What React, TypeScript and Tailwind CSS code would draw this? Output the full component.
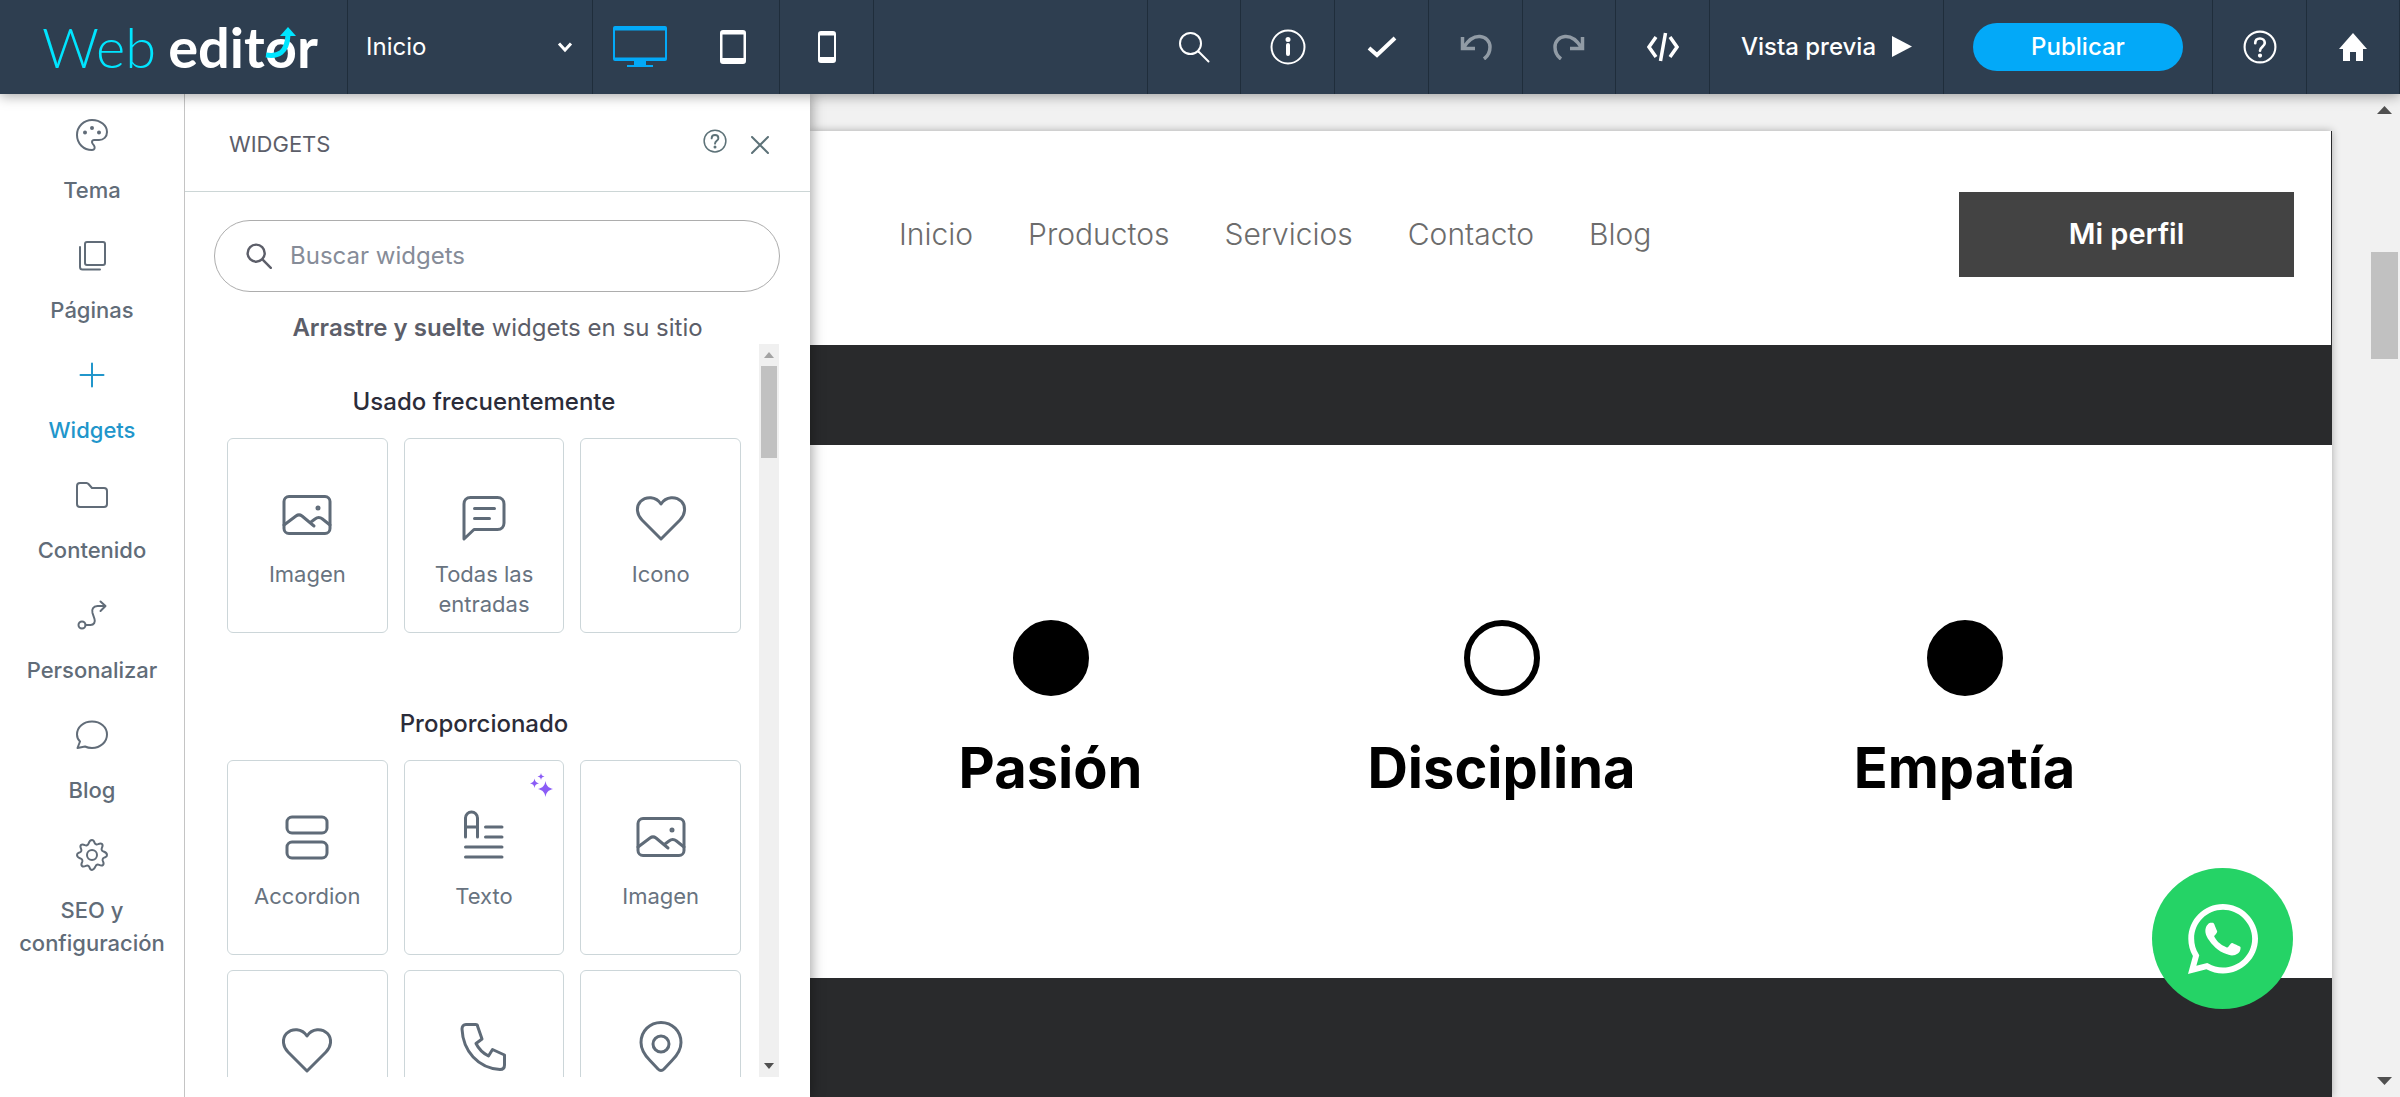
import React, { useState } from 'react';
import { FaWhatsapp } from 'react-icons/fa';

type IconProps = { className?: string };

// shared wrapper for the line icons
const Line = ({ className, box = 24, width = 1.5, children }: IconProps & { box?: number; width?: number; children: React.ReactNode }) => (
  <svg viewBox={`0 0 ${box} ${box}`} className={className} fill="none" stroke="currentColor" strokeWidth={width} strokeLinecap="round" strokeLinejoin="round" aria-hidden="true">
    {children}
  </svg>
);

const PaletteIcon = ({ className }: IconProps) => (
  <Line className={className} box={32} width={2}>
    <path d="M16 31C7.500 31 1 24.500 1 16S8 1 16 1c8.500 0 15 5.500 15 12 0 5-3.500 8-8 8h-5c-2 0-2.500 2-1.500 3.500l1.500 2c1.500 2.500.500 4.500-2 4.500z" />
    <circle cx="9" cy="13.500" r="1" fill="currentColor" />
    <circle cx="16" cy="9" r="1" fill="currentColor" />
    <circle cx="23" cy="13.500" r="1" fill="currentColor" />
  </Line>
);

const PagesIcon = ({ className }: IconProps) => (
  <Line className={className} box={32} width={2}>
    <rect x="9" y="3" width="20" height="23" rx="2" />
    <path d="M4 8v20a2.500 2.500 0 0 0 2.500 2.500H24" />
  </Line>
);

const PlusIcon = ({ className }: IconProps) => (
  <Line className={className} box={32} width={2}>
    <path d="M16 4.500v23M4.500 16h23" />
  </Line>
);

const FolderIcon = ({ className }: IconProps) => (
  <Line className={className} box={32} width={2}>
    <path d="M1 7a3 3 0 0 1 3-3h6.500a3 3 0 0 1 2 1l3.500 4h12a3 3 0 0 1 3 3v13a3 3 0 0 1-3 3H4a3 3 0 0 1-3-3z" />
  </Line>
);

const RouteIcon = ({ className }: IconProps) => (
  <Line className={className} box={32} width={2}>
    <circle cx="6" cy="26" r="3.500" />
    <path d="M9.500 26h5c3.500 0 5-3 4-6l-2-6c-1-3.500.500-7 5-7H29M24.500 2.500 29.500 7l-5 5" />
  </Line>
);

const ChatIcon = ({ className }: IconProps) => (
  <Line className={className} box={32} width={2}>
    <path d="M16 2.500c8.500 0 15 5.500 15 13s-6.500 13.500-15 13.500c-2.500 0-5-.5-7-1.500l-7.500 1.500 2.500-6.500c-2-2-3-4.500-3-7C1 8 7.500 2.500 16 2.500z" />
  </Line>
);

const GearIcon = ({ className }: IconProps) => (
  <Line className={className} box={32} width={2}>
    <circle cx="16" cy="16" r="5" />
    <path d="M16 1c1.600 0 2 1.200 2.600 2.800.6 1.500 2 2 3.500 1.300 1.600-.8 2.800-1.200 3.900-.1s.7 2.300-.1 3.900c-.7 1.500-.2 2.900 1.300 3.500 1.600.6 3.800 1.200 3.800 3.600s-1.200 2-2.800 2.600c-1.500.6-2 2-1.300 3.500.8 1.600 1.200 2.800.1 3.900s-2.300.7-3.900-.1c-1.500-.7-2.900-.2-3.500 1.300C18.400 29.800 17.600 31 16 31s-2-1.200-2.600-2.800c-.6-1.500-2-2-3.500-1.300-1.600.8-2.800 1.200-3.900.1s-.7-2.300.1-3.900c.7-1.500.2-2.900-1.300-3.500C3.200 19 1 18.400 1 16s1.200-2 2.800-2.600c1.500-.6 2-2 1.300-3.500C4.300 8.300 3.900 7.100 5 6s2.300-.7 3.900.1c1.500.7 2.900.2 3.500-1.300C13 3.200 14.400 1 16 1z" />
  </Line>
);

const ImageIcon = ({ className }: IconProps) => (
  <Line className={className} box={56} width={3}>
    <rect x="5" y="9.500" width="46" height="37" rx="5" />
    <path d="M5 38l12-9c2-1.500 4-1.500 6 0l12 10M32 35l4-3c2.500-2 5-2 7.500 0l7.500 6" />
    <circle cx="39" cy="21" r="1" fill="currentColor" />
  </Line>
);

const PostsIcon = ({ className }: IconProps) => (
  <Line className={className} box={56} width={3}>
    <path d="M8 52V17c0-4 2.500-6.500 6.500-6.500h27c4 0 6.500 2.500 6.500 6.500v19c0 4-2.500 6.500-6.500 6.500H18z" />
    <path d="M18.500 21.500h20M18.500 31.500h15" />
  </Line>
);

const HeartIcon = ({ className }: IconProps) => (
  <Line className={className} box={56} width={3}>
    <path d="M28 52 9 33c-5-5-6.500-13-1.500-18.500C13 9 23 9 28 17c5-8 15-8 20.500-2.500C53.500 20 52 28 47 33z" />
  </Line>
);

const AccordionIcon = ({ className }: IconProps) => (
  <Line className={className} box={56} width={3}>
    <rect x="8" y="8" width="40" height="16" rx="5" />
    <rect x="8" y="33" width="40" height="16" rx="5" />
  </Line>
);

const TextIcon = ({ className }: IconProps) => (
  <Line className={className} box={56} width={3}>
    <path d="M9.500 28V9a6 6 0 0 1 12 0v19M9.500 18h12M29.500 18H46M29.500 28H46M9.500 38H46M9.500 48H46" />
  </Line>
);

const PhoneIcon = ({ className }: IconProps) => (
  <Line className={className} box={56} width={3}>
    <path d="M10 5.500h9.500c1 0 2 .5 2 1.500L26 20l-6 4.500c3 6 6.500 9.500 12.500 12.500l4-6.500L48.500 36v10c0 2.500-1.500 4.500-4.500 4.500C22 49 7 32 6 10c0-2.500 1.500-4.500 4-4.500z" />
  </Line>
);

const PinIcon = ({ className }: IconProps) => (
  <Line className={className} box={56} width={3}>
    <path d="M28 3.500c11 0 20 8.500 20 20 0 8-4 13-9 18l-8 8.500c-2 2-4 2-6 0l-8-8.500c-5-5-9-10-9-18 0-11.500 9-20 20-20z" />
    <circle cx="28" cy="25" r="8" />
  </Line>
);

const SearchIcon = ({ className, width = 2 }: IconProps & { width?: number }) => (
  <Line className={className} box={32} width={width}>
    <circle cx="12.500" cy="12.500" r="10.500" />
    <path d="M20.500 20.500 30.500 30.500" />
  </Line>
);

const HelpIcon = ({ className }: IconProps) => (
  <Line className={className} box={32} width={2}>
    <circle cx="16" cy="16" r="14.500" />
    <path d="M11.500 12.500c0-3 2-4.500 4.500-4.500s4.500 1.800 4.500 4.200c0 3.300-4.500 3.800-4.500 7.300" strokeWidth="2.500" />
    <circle cx="16" cy="24" r="1" fill="currentColor" />
  </Line>
);

const Sparkles = ({ className }: IconProps) => (
  <svg viewBox="0 0 24 24" className={className} fill="#8b5cf6" aria-hidden="true">
    <path d="M16.500 8c1 5 2.500 6.500 7.500 8-5 1.500-6.500 3-7.500 8-1-5-2.500-6.500-7.500-8 5-1.500 6.500-3 7.500-8zM5.500 5.500c.6 3 1.500 4 4.500 4.800-3 .8-3.900 1.800-4.500 4.700-.6-2.900-1.500-3.900-4.500-4.700 3-.8 3.900-1.800 4.500-4.800zM12 0c.5 2.200 1.200 3 3.500 3.500C13.200 4 12.500 4.800 12 7c-.5-2.200-1.200-3-3.500-3.500C10.800 3 11.500 2.200 12 0z" />
  </svg>
);

const sections = [
  { label: 'Tema', icon: PaletteIcon },
  { label: 'Páginas', icon: PagesIcon },
  { label: 'Widgets', icon: PlusIcon },
  { label: 'Contenido', icon: FolderIcon },
  { label: 'Personalizar', icon: RouteIcon },
  { label: 'Blog', icon: ChatIcon },
  { label: 'SEO y configuración', icon: GearIcon },
];

type Widget = { label?: string; icon: React.FC<IconProps>; ai?: boolean };

const frequent: Widget[] = [
  { label: 'Imagen', icon: ImageIcon },
  { label: 'Todas las entradas', icon: PostsIcon },
  { label: 'Icono', icon: HeartIcon },
];

const provided: Widget[] = [
  { label: 'Accordion', icon: AccordionIcon },
  { label: 'Texto', icon: TextIcon, ai: true },
  { label: 'Imagen', icon: ImageIcon },
  { icon: HeartIcon },
  { icon: PhoneIcon },
  { icon: PinIcon },
];

const values = [
  { label: 'Pasión', filled: true },
  { label: 'Disciplina', filled: false },
  { label: 'Empatía', filled: true },
];

const links = ['Inicio', 'Productos', 'Servicios', 'Contacto', 'Blog'];

const cell = 'h-full shrink-0 flex items-center justify-center border-l border-[#1f2d3b]';

function Logo() {
  return (
    <a href="#" className="relative flex w-[347px] shrink-0 items-center gap-3 pl-[42px] font-[Lato,sans-serif] leading-none">
      <span className="text-[56px] font-light text-[#00e5ff]">Web</span>
      <span className="text-[56px] font-bold text-white">editor</span>
      <svg viewBox="0 0 32 32" className="absolute top-[27px] left-[265px] w-8" fill="none" aria-hidden="true">
        <path d="M1 28c12 2 21-2 22-20" stroke="#00e5ff" strokeWidth="5" />
        <path d="M23 0 31 9H15z" fill="#00e5ff" />
      </svg>
    </a>
  );
}

function TopBar() {
  return (
    <header className="relative z-30 flex h-[94px] shrink-0 bg-[#2e3e50] text-white shadow-[0_2px_12px_rgba(0,0,0,0.35)]">
      <Logo />
      <div className="relative flex w-[245px] shrink-0 items-center border-l border-[#1f2d3b]">
        <select aria-label="Página" className="h-full w-full appearance-none bg-transparent pl-[18px] text-2xl text-white">
          <option>Inicio</option>
        </select>
        <svg viewBox="0 0 16 12" className="pointer-events-none absolute right-[19px] w-4" fill="none" stroke="currentColor" strokeWidth="3" aria-hidden="true">
          <path d="M2 2.500 8 9l6-6.500" />
        </svg>
      </div>
      <div className={`${cell} w-[187px]`}>
        <button aria-label="Escritorio" className="flex h-full flex-1 items-center justify-center">
          <svg viewBox="0 0 54 42" className="w-[54px]" fill="#03a9f8" aria-hidden="true">
            <path fillRule="evenodd" d="M2 0h50a2 2 0 0 1 2 2v31a2 2 0 0 1-2 2H33v4h7v2H14v-2h7v-4H2a2 2 0 0 1-2-2V2a2 2 0 0 1 2-2zM2 4.500v27h50v-27z" />
          </svg>
        </button>
        <button aria-label="Tableta" className="flex h-full flex-1 items-center justify-center">
          <svg viewBox="0 0 26 34" className="w-[26px]" fill="currentColor" aria-hidden="true">
            <path fillRule="evenodd" d="M3 0h20a3 3 0 0 1 3 3v28a3 3 0 0 1-3 3H3a3 3 0 0 1-3-3V3a3 3 0 0 1 3-3zM2.500 4.500V28h21V4.500z" />
          </svg>
        </button>
      </div>
      <button aria-label="Móvil" className={`${cell} w-[94px]`}>
        <svg viewBox="0 0 18 32" className="w-[18px]" fill="currentColor" aria-hidden="true">
          <path fillRule="evenodd" d="M3 0h12a3 3 0 0 1 3 3v26a3 3 0 0 1-3 3H3a3 3 0 0 1-3-3V3a3 3 0 0 1 3-3zM2 4.500V26h14V4.500z" />
        </svg>
      </button>
      <div className="h-full flex-1 border-l border-[#1f2d3b]" />
      <button aria-label="Buscar" className={`${cell} w-[93px]`}>
        <SearchIcon className="w-8" />
      </button>
      <button aria-label="Información" className={`${cell} w-[94px]`}>
        <Line className="w-9" box={36} width={2}>
          <circle cx="18" cy="18" r="16.500" />
          <path d="M18 16v9" strokeWidth="4" />
          <circle cx="18" cy="10.500" r="1.500" fill="currentColor" />
        </Line>
      </button>
      <button aria-label="Guardado" className={`${cell} w-[94px]`}>
        <svg viewBox="0 0 30 22" className="w-[30px]" fill="none" stroke="currentColor" strokeWidth="4" aria-hidden="true">
          <path d="M2 12l8 7L28 2" />
        </svg>
      </button>
      <button aria-label="Deshacer" disabled className={`${cell} w-[94px] text-[#919ba5]`}>
        <svg viewBox="0 0 32 26" className="w-8" fill="none" stroke="currentColor" strokeWidth="3.500" aria-hidden="true">
          <path d="M2.500 3v11.500H15M4 13C9 5 14 2 20 2.500c6 .5 10 5 10 10.500 0 5-2 9-6 12" />
        </svg>
      </button>
      <button aria-label="Rehacer" disabled className={`${cell} w-[93px] text-[#919ba5]`}>
        <svg viewBox="0 0 32 26" className="w-8" fill="none" stroke="currentColor" strokeWidth="3.500" aria-hidden="true">
          <path d="M29.500 3v11.500H17M28 13C23 5 18 2 12 2.500 6 3 2 7.500 2 13c0 5 2 9 6 12" />
        </svg>
      </button>
      <button aria-label="Código" className={`${cell} w-[94px]`}>
        <svg viewBox="0 0 32 30" className="w-8" fill="none" stroke="currentColor" strokeWidth="3.500" aria-hidden="true">
          <path d="M9 5 2 15l7 10M23 5l7 10-7 10M18.500 1l-5 28" />
        </svg>
      </button>
      <button className={`${cell} w-[234px] gap-4 text-2xl font-medium`}>
        Vista previa
        <svg viewBox="0 0 19 20" className="w-5" fill="currentColor" aria-hidden="true">
          <path d="M0 0 19 10 0 20z" />
        </svg>
      </button>
      <div className={`${cell} w-[269px]`}>
        <button className="h-12 w-[210px] rounded-full bg-[#03a9f8] text-2xl font-medium">Publicar</button>
      </div>
      <button aria-label="Ayuda" className={`${cell} w-[94px]`}>
        <HelpIcon className="w-[34px]" />
      </button>
      <button aria-label="Ir al inicio" className={`${cell} w-[94px] border-r`}>
        <svg viewBox="0 0 28 28" className="w-7" fill="currentColor" aria-hidden="true">
          <path d="M14 0 28 16h-4v12h-7v-9h-6v9H4V16H0z" />
        </svg>
      </button>
    </header>
  );
}

function WidgetGrid({ title, items }: { title: string; items: Widget[] }) {
  return (
    <section>
      <h3 className="mb-5 text-center text-2xl leading-8 font-medium text-[#2b2c39]">{title}</h3>
      <div className="grid grid-cols-3 gap-x-4 gap-y-[15px]">
        {items.map((w, i) => (
          <button key={i} className="relative flex h-[195px] flex-col items-center rounded-md border border-[#ccd6d9] px-4 pt-12 text-[22px] leading-[30px] text-[#687380]">
            <w.icon className="mb-4 w-14 text-[#5f6b78]" />
            {w.label}
            {w.ai && <Sparkles className="absolute top-3 right-2.5 w-6" />}
          </button>
        ))}
      </div>
    </section>
  );
}

function WidgetsPanel() {
  const [query, setQuery] = useState('');
  return (
    <aside className="z-10 flex w-[626px] shrink-0 flex-col border-l border-[#c4c4c4] bg-white pb-5 shadow-[2px_0_12px_rgba(0,0,0,0.35)]">
      <div className="flex h-[98px] shrink-0 items-center border-b border-[#ccd6d6] pr-[41px] pl-11 text-[#5d7278]">
        <h2 className="flex-1 pt-1 text-[22px] text-[#5c5e69]">WIDGETS</h2>
        <button aria-label="Ayuda de widgets" className="mr-6 mb-1">
          <HelpIcon className="w-6" />
        </button>
        <button aria-label="Cerrar" className="pt-1">
          <Line className="w-[18px]" box={18} width={2}>
            <path d="M1 1l16 16M17 1 1 17" />
          </Line>
        </button>
      </div>
      <label className="mr-[30px] ml-[29px] mt-7 flex h-[72px] shrink-0 items-center gap-[18px] rounded-full border border-[#adadad] px-[31px] text-[#5c5e69]">
        <SearchIcon className="w-[26px] shrink-0" width={3} />
        <input type="text" aria-label="Buscar widgets" value={query} onChange={e => setQuery(e.target.value)} placeholder="Buscar widgets" className="min-w-0 flex-1 text-2xl outline-none placeholder:text-[#868c98]" />
      </label>
      <p className="mt-5 text-center text-2xl leading-8 text-[#5c5e69]">
        <b className="font-semibold">Arrastre y suelte</b> widgets en su sitio
      </p>
      <div className="mr-[31px] ml-[42px] flex min-h-0 flex-1">
        <div className="flex min-w-0 flex-1 flex-col gap-[75px] overflow-hidden pt-[42px] pr-[18px]">
          <WidgetGrid title="Usado frecuentemente" items={frequent} />
          <WidgetGrid title="Proporcionado" items={provided} />
        </div>
        <div className="flex w-5 flex-col items-center bg-[#f0f0f0]">
          <svg viewBox="0 0 10 6" className="my-2 w-2.5 shrink-0" fill="#a3a3a3" aria-hidden="true">
            <path d="M0 6h10L5 0z" />
          </svg>
          <div className="h-[92px] w-4 bg-[#c1c1c1]" />
          <svg viewBox="0 0 10 6" className="mt-auto mb-2 w-2.5 shrink-0" fill="#505050" aria-hidden="true">
            <path d="M0 0h10L5 6z" />
          </svg>
        </div>
      </div>
    </aside>
  );
}

function SitePreview() {
  return (
    <main className="relative mt-[37px] flex min-w-0 flex-1 flex-col bg-[#292a2c] shadow-[0_0_8px_rgba(0,0,0,0.3)]">
      <div className="mr-px flex h-[214px] shrink-0 items-center justify-between bg-white pr-[37px] pb-2 pl-[89px]">
        <nav className="flex gap-[55px] text-[30px] font-light text-[#6c6c6c]">
          {links.map(l => (
            <a key={l} href="#">{l}</a>
          ))}
        </nav>
        <button className="h-[85px] w-[335px] bg-[#434343] text-[29px] font-semibold text-white">Mi perfil</button>
      </div>
      <div className="mt-[100px] grid h-[533px] shrink-0 grid-cols-[451fr_451fr_475fr] bg-white pt-[175px] pr-[130px] pl-[15px]">
        {values.map(v => (
          <div key={v.label} className="flex flex-col items-center gap-[34px]">
            <span className={`size-[76px] rounded-full border-[6px] border-black ${v.filled ? 'bg-black' : ''}`} />
            <h2 className="text-[56px] leading-[76px] font-bold text-black">{v.label}</h2>
          </div>
        ))}
      </div>
      <a href="#" aria-label="WhatsApp" className="absolute right-[39px] bottom-[88px] flex size-[141px] items-center justify-center rounded-full bg-[#25d366] text-white">
        <FaWhatsapp className="size-20" />
      </a>
    </main>
  );
}

export default function App() {
  const [active, setActive] = useState('Widgets');

  return (
    <div className="flex h-screen flex-col overflow-hidden bg-[#f1f1f1] font-[Inter,sans-serif]">
      <TopBar />
      <div className="flex min-h-0 flex-1">
        <nav className="z-20 flex w-[184px] shrink-0 flex-col bg-white pt-[25px]">
          {sections.map(s => (
            <button key={s.label} onClick={() => setActive(s.label)} className={`flex min-h-[120px] flex-col items-center gap-[23px] px-2 text-[22px] leading-[33px] font-medium ${active === s.label ? 'text-[#2196cb]' : 'text-[#616c78]'}`}>
              <s.icon className="w-8" />
              {s.label}
            </button>
          ))}
        </nav>
        <WidgetsPanel />
        <SitePreview />
        <div className="flex w-[68px] shrink-0 flex-col items-end">
          <svg viewBox="0 0 15 8" className="mt-3 mr-2 w-[15px] shrink-0" fill="#505050" aria-hidden="true">
            <path d="M0 8h15L7.500 0z" />
          </svg>
          <div className="mt-[138px] mr-0.5 h-[107px] w-[27px] bg-[#c1c1c1]" />
          <svg viewBox="0 0 15 8" className="mt-auto mr-2 mb-3 w-[15px] shrink-0" fill="#505050" aria-hidden="true">
            <path d="M0 0h15L7.500 8z" />
          </svg>
        </div>
      </div>
    </div>
  );
}
